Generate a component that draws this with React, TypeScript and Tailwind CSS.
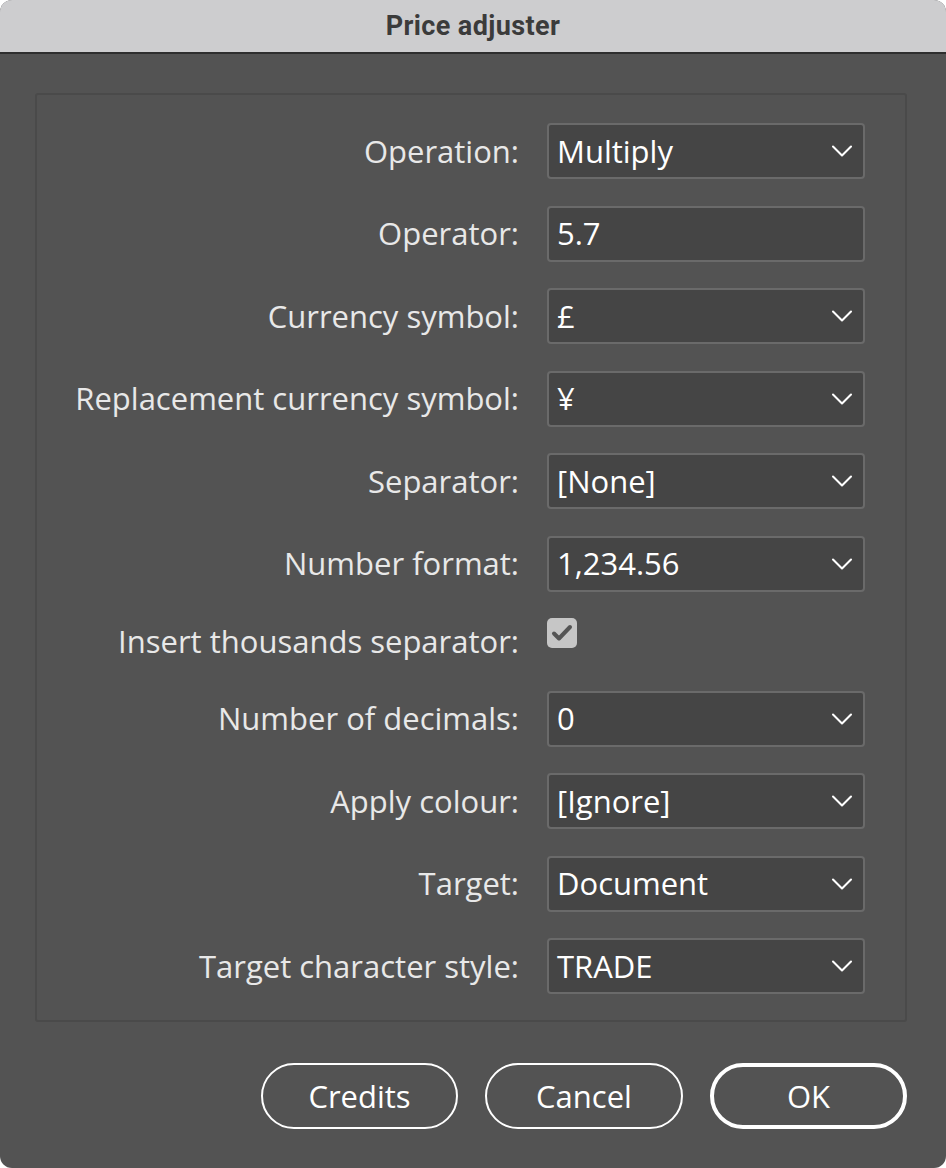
import { ChevronDown } from "lucide-react";

type Row =
  | { label: string; kind: "select"; value: string }
  | { label: string; kind: "input"; value: string }
  | { label: string; kind: "check" };

const rows: Row[] = [
  { label: "Operation:", kind: "select", value: "Multiply" },
  { label: "Operator:", kind: "input", value: "5.7" },
  { label: "Currency symbol:", kind: "select", value: "£" },
  { label: "Replacement currency symbol:", kind: "select", value: "¥" },
  { label: "Separator:", kind: "select", value: "[None]" },
  { label: "Number format:", kind: "select", value: "1,234.56" },
  { label: "Insert thousands separator:", kind: "check" },
  { label: "Number of decimals:", kind: "select", value: "0" },
  { label: "Apply colour:", kind: "select", value: "[Ignore]" },
  { label: "Target:", kind: "select", value: "Document" },
  { label: "Target character style:", kind: "select", value: "TRADE" },
];

function Field({ row }: { row: Row }) {
  if (row.kind === "check") {
    return (
      <div className="w-[318px] self-start">
        <div className="w-[30px] h-[30px] rounded-[5px] bg-[#c6c6c6] flex items-center justify-center">
          <svg width="24" height="24" viewBox="0 0 24 24" fill="none">
            <path d="M4 12.5l5 5L20 6" stroke="#555" strokeWidth="4" strokeLinecap="round" strokeLinejoin="round" />
          </svg>
        </div>
      </div>
    );
  }
  return (
    <div className="w-[318px] h-[56px] rounded-[4px] border-2 border-[#6a6a6a] bg-[#454545] flex items-center pl-[8px] pr-[3px]">
      <span className="flex-1 text-white text-[31px] leading-none">{row.value}</span>
      {row.kind === "select" && <ChevronDown size={36} strokeWidth={1.4} className="text-white" />}
    </div>
  );
}

export default function App() {
  return (
    <div className="w-[946px] h-[1168px] bg-white" style={{ fontFamily: '"Open Sans", sans-serif' }}>
      <div className="w-full h-full rounded-[12px] overflow-hidden bg-[#535353] flex flex-col">
        {/* title bar */}
        <div className="h-[54px] shrink-0 bg-[#cdcdcf] border-b-2 border-[#2e2e2e] flex items-center justify-center">
          <span className="text-[27px] font-bold text-[#3b3b3b] tracking-[0.4px]" style={{ fontFamily: "Roboto, sans-serif" }}>
            Price adjuster
          </span>
        </div>

        {/* group box */}
        <div className="mt-[39px] ml-[35px] mr-[39px] rounded-[3px] border-2 border-[#4a4a4a] pt-[28px] pb-[26px] pr-[40px] flex flex-col gap-[26.5px]">
          {rows.map((r) => (
            <div key={r.label} className={`flex items-center gap-[28px] ${r.kind === "check" ? "h-[46px]" : "h-[56px]"}`}>
              <span className="flex-1 text-right text-[31px] text-[#e8e8e8] whitespace-nowrap">{r.label}</span>
              <Field row={r} />
            </div>
          ))}
        </div>

        {/* buttons */}
        <div className="mt-[41px] mr-[39px] flex justify-end gap-[27px]">
          <button className="w-[197px] h-[66px] rounded-full border-2 border-white text-white text-[31px]">Credits</button>
          <button className="w-[198px] h-[66px] rounded-full border-2 border-white text-white text-[31px]">Cancel</button>
          <button className="w-[197px] h-[66px] rounded-full border-4 border-white text-white text-[31px]">OK</button>
        </div>
      </div>
    </div>
  );
}
